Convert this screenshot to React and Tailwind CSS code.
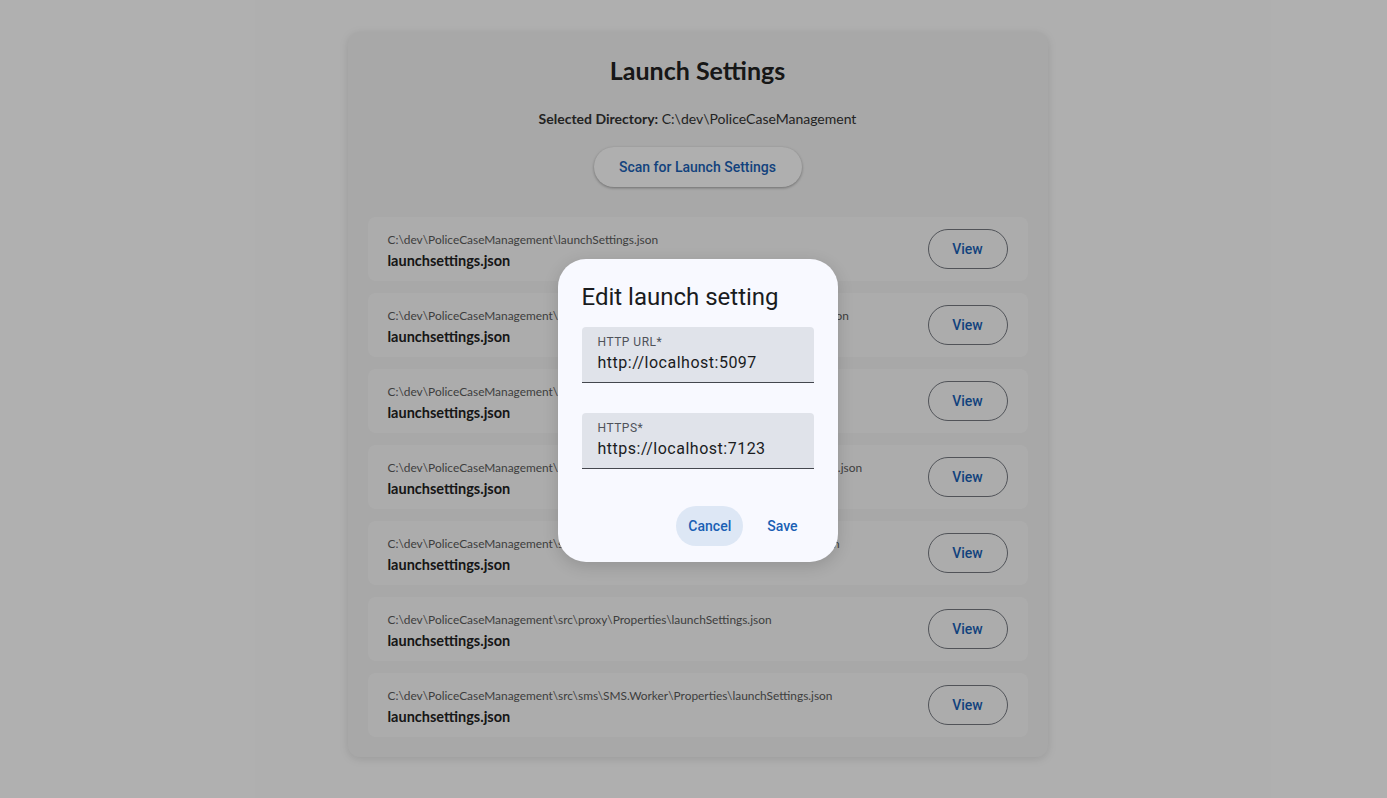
import React from 'react';

const files = [
  'C:\\dev\\PoliceCaseManagement\\launchSettings.json',
  'C:\\dev\\PoliceCaseManagement\\src\\identity\\Identity.API\\Properties\\launchSettings.json',
  'C:\\dev\\PoliceCaseManagement\\src\\cases\\Cases.API\\Properties\\launchSettings.json',
  'C:\\dev\\PoliceCaseManagement\\src\\evidence\\Evidence.API\\Properties\\launchSettings.json',
  'C:\\dev\\PoliceCaseManagement\\src\\people\\People.API\\Properties\\launchSettings.json',
  'C:\\dev\\PoliceCaseManagement\\src\\proxy\\Properties\\launchSettings.json',
  'C:\\dev\\PoliceCaseManagement\\src\\sms\\SMS.Worker\\Properties\\launchSettings.json',
];

function FileRow({ path }) {
  return (
    <div className="flex h-16 items-center justify-between rounded-lg bg-[#f7f7f7] px-5">
      <div className="flex flex-col pt-1">
        <span className="text-[11.9px] leading-4 text-[#5a5a5a]">{path}</span>
        <span className="mt-[3px] text-[14.5px] font-bold leading-5 text-[#222]">launchsettings.json</span>
      </div>
      <button className="h-10 w-20 rounded-full border border-[#74777f] font-['Roboto'] text-[14px] font-medium text-[#1a5fb4]">
        View
      </button>
    </div>
  );
}

function Field({ label, value }) {
  return (
    <div className="flex h-14 flex-col rounded-t border-b border-[#44474e] bg-[#e0e3ea] px-4 pt-[7px]">
      <span className="text-[12px] leading-4 tracking-[0.5px] text-[#4f525a]">{label}</span>
      <span className="mt-[1px] text-[16px] leading-6 tracking-[0.5px] text-[#1a1c1e]">{value}</span>
    </div>
  );
}

export default function App() {
  return (
    <div className="relative min-h-[798px] bg-[#fbfbfb] font-['Lato',sans-serif]">
      {/* page behind the dialog */}
      <div className="flex justify-center pl-2 pt-8">
        <div className="flex w-[700px] flex-col rounded-xl bg-[#f1f1f1] px-5 pb-5 shadow-[0_2px_10px_rgba(0,0,0,0.12)]">
          <h1 className="mt-[22px] text-center text-[25px] font-bold leading-8 text-[#222]">Launch Settings</h1>
          <p className="mt-[23px] text-center text-[14px] leading-5 text-[#333]">
            <span className="font-bold">Selected Directory:</span> C:\dev\PoliceCaseManagement
          </p>
          <div className="mt-[18px] flex justify-center">
            <button className="h-10 w-[208px] rounded-full bg-[#fbfbfb] font-['Roboto'] text-[14px] font-medium text-[#1a5fb4] shadow-[0_1px_3px_rgba(0,0,0,0.35)]">
              Scan for Launch Settings
            </button>
          </div>
          <div className="mt-[30px] flex flex-col gap-3">
            {files.map((f, i) => (
              <FileRow key={i} path={f} />
            ))}
          </div>
        </div>
      </div>

      {/* scrim + dialog */}
      <div className="absolute inset-0 flex items-start justify-center bg-black/30 pl-2">
        <div className="mt-[259px] flex w-[280px] flex-col rounded-[28px] bg-[#f8f9ff] px-6 pb-4 pt-[22px] font-['Roboto'] shadow-[0_4px_16px_rgba(0,0,0,0.15)]">
          <h2 className="text-[24px] leading-8 text-[#1a1c1e]">Edit launch setting</h2>
          <div className="mt-[14px] flex flex-col gap-[30px]">
            <Field label="HTTP URL*" value="http://localhost:5097" />
            <Field label="HTTPS*" value="https://localhost:7123" />
          </div>
          <div className="mt-[37px] flex justify-end gap-3 pr-[4px]">
            <button className="h-10 rounded-full bg-[#dde7f5] px-3 text-[14px] font-medium text-[#1a5fb4]">Cancel</button>
            <button className="h-10 rounded-full px-3 text-[14px] font-medium text-[#1a5fb4]">Save</button>
          </div>
        </div>
      </div>
    </div>
  );
}
